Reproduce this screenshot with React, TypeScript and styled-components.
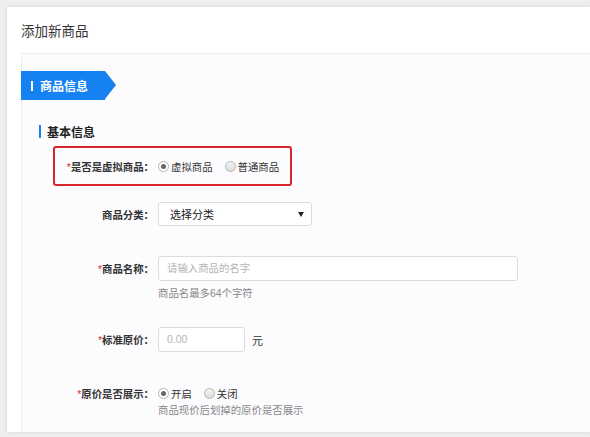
import styled, { createGlobalStyle } from "styled-components";

const GlobalStyle = createGlobalStyle`
    html, body {
        margin: 0;
        padding: 0;
        background: #efeff1;
    }
    body {
        font-family: "Liberation Sans", "Noto Sans CJK SC", sans-serif;
        color: #333;
    }
`;

const Page = styled.div`
    padding: 7px 0 5px 7px;
    height: 437px;
    box-sizing: border-box;
`;

const Card = styled.div`
    height: 100%;
    background: #fff;
    box-shadow: 0 0 4px rgba(0, 0, 0, 0.12);
    display: flex;
    flex-direction: column;
`;

const Header = styled.div`
    height: 46px;
    padding-left: 14px;
    display: flex;
    align-items: center;
    font-size: 13.5px;
    color: #333;
    flex-shrink: 0;
`;

const Panel = styled.div`
    flex: 1;
    margin-left: 14px;
    border-top: 1px solid #ececee;
    border-left: 1px solid #ececee;
    background: #fcfbfd;
    padding-top: 17px;
`;

const Tab = styled.div`
    position: relative;
    width: 84px;
    height: 29px;
    margin-left: -1px;
    background: #1681f1;
    color: #fff;
    font-size: 12px;
    font-weight: bold;
    display: flex;
    align-items: center;
    gap: 7px;
    padding-left: 10px;
    box-sizing: border-box;
    &::after {
        content: "";
        position: absolute;
        right: -11px;
        top: 0;
        border-top: 14.5px solid transparent;
        border-bottom: 14.5px solid transparent;
        border-left: 11px solid #1681f1;
    }
`;

const Bar = styled.span<{ $h: number }>`
    display: inline-block;
    width: 2px;
    height: ${(p) => p.$h}px;
    background: ${(p) => (p.$h > 11 ? "#1681f1" : "#fff")};
`;

const Heading = styled.div`
    margin: 23px 0 0 17px;
    height: 16px;
    display: flex;
    align-items: center;
    gap: 6px;
    font-size: 12px;
    font-weight: bold;
    color: #222;
`;

const Form = styled.div`
    padding-left: 31px;
    display: flex;
    flex-direction: column;
`;

const Highlight = styled.div`
    margin-top: 7px;
    width: 239px;
    height: 40px;
    border: 2px solid #d8262b;
    border-radius: 3px;
    box-sizing: border-box;
    display: flex;
    align-items: center;
`;

const Row = styled.div<{ $top?: number }>`
    display: flex;
    align-items: center;
    margin-top: ${(p) => p.$top ?? 0}px;
`;

const Label = styled.div<{ $w?: number }>`
    width: ${(p) => p.$w ?? 105}px;
    padding-right: 4px;
    box-sizing: border-box;
    text-align: right;
    font-size: 10.4px;
    font-weight: bold;
    color: #333;
    white-space: nowrap;
`;

const Star = styled.span`
    color: #d8262b;
    font-weight: normal;
`;

const RadioGroup = styled.div`
    display: flex;
    align-items: center;
    gap: 12px;
`;

const RadioItem = styled.label`
    display: flex;
    align-items: center;
    gap: 2px;
    font-size: 10.4px;
    color: #333;
`;

const Dot = styled.span<{ $on?: boolean }>`
    width: 11px;
    height: 11px;
    border-radius: 50%;
    border: 1px solid #b5b5b5;
    background: ${(p) => (p.$on ? "#fff" : "linear-gradient(#f4f4f4, #dcdcdc)")};
    box-sizing: border-box;
    display: flex;
    align-items: center;
    justify-content: center;
    &::after {
        content: "";
        width: 5px;
        height: 5px;
        border-radius: 50%;
        background: ${(p) => (p.$on ? "#666" : "transparent")};
    }
`;

const Select = styled.div`
    width: 154px;
    height: 24px;
    background: #fff;
    border: 1px solid #dcdcdc;
    border-radius: 3px;
    box-sizing: border-box;
    display: flex;
    align-items: center;
    justify-content: space-between;
    padding: 0 7px 0 11px;
    font-size: 11px;
    color: #222;
`;

const Caret = styled.span`
    width: 0;
    height: 0;
    border-left: 3px solid transparent;
    border-right: 3px solid transparent;
    border-top: 5px solid #222;
`;

const Input = styled.input<{ $w: number; $h: number }>`
    width: ${(p) => p.$w}px;
    height: ${(p) => p.$h}px;
    box-sizing: border-box;
    border: 1px solid #dcdcdc;
    border-radius: 3px;
    background: #fff;
    padding: 0 8px;
    font-family: inherit;
    font-size: 10.4px;
    outline: none;
    &::placeholder {
        color: #b3b3b3;
    }
`;

const Unit = styled.span`
    margin-left: 7px;
    font-size: 11px;
    color: #333;
`;

const Hint = styled.div<{ $top: number }>`
    margin: ${(p) => p.$top}px 0 0 105px;
    line-height: 16px;
    font-size: 10.4px;
    color: #888;
`;

const App = () => {
    return (
        <>
            <GlobalStyle />
            <Page>
                <Card>
                    <Header>添加新商品</Header>
                    <Panel>
                        <Tab>
                            <Bar $h={10} />
                            商品信息
                        </Tab>
                        <Heading>
                            <Bar $h={13} />
                            基本信息
                        </Heading>
                        <Form>
                            <Highlight>
                                <Label $w={103}>
                                    <Star>*</Star>是否是虚拟商品：
                                </Label>
                                <RadioGroup>
                                    <RadioItem>
                                        <Dot $on />
                                        虚拟商品
                                    </RadioItem>
                                    <RadioItem>
                                        <Dot />
                                        普通商品
                                    </RadioItem>
                                </RadioGroup>
                            </Highlight>
                            <Row $top={16}>
                                <Label>商品分类：</Label>
                                <Select>
                                    选择分类
                                    <Caret />
                                </Select>
                            </Row>
                            <Row $top={30}>
                                <Label>
                                    <Star>*</Star>商品名称：
                                </Label>
                                <Input $w={360} $h={25} placeholder="请输入商品的名字" />
                            </Row>
                            <Hint $top={5}>商品名最多64个字符</Hint>
                            <Row $top={25}>
                                <Label>
                                    <Star>*</Star>标准原价：
                                </Label>
                                <Input $w={87} $h={25} placeholder="0.00" />
                                <Unit>元</Unit>
                            </Row>
                            <Row $top={32} style={{ height: 18 }}>
                                <Label>
                                    <Star>*</Star>原价是否展示：
                                </Label>
                                <RadioGroup>
                                    <RadioItem>
                                        <Dot $on />
                                        开启
                                    </RadioItem>
                                    <RadioItem>
                                        <Dot />
                                        关闭
                                    </RadioItem>
                                </RadioGroup>
                            </Row>
                            <Hint $top={1}>商品现价后划掉的原价是否展示</Hint>
                        </Form>
                    </Panel>
                </Card>
            </Page>
        </>
    );
};

export default App;
